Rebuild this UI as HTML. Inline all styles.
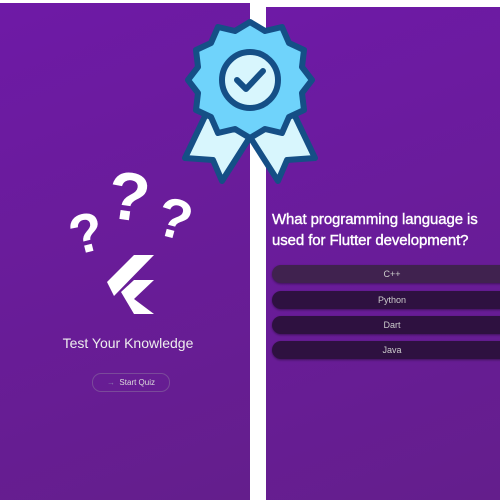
<!DOCTYPE html>
<html><head><style>
body{margin:0;width:500px;height:500px;background:#fff;position:relative;overflow:hidden;font-family:"Liberation Sans",sans-serif}
.p{position:absolute;background:linear-gradient(160deg,#6e1aa6,#641e8c)}
.opt{position:absolute;left:272px;width:240px;height:18px;border-radius:9px;background:#2e1140;color:#ccc;font-size:9px;text-align:center;line-height:18px;box-shadow:0 1px 2px rgba(0,0,0,.4)}
</style></head><body>
<div class="p" style="left:0;top:3px;width:250px;height:497px"></div>
<div class="p" style="left:266px;top:7px;width:234px;height:493px"></div>
<svg style="position:absolute;left:0;top:0" width="500" height="500">
<g fill="#fff" font-family="Liberation Sans" font-weight="bold" text-anchor="middle">
<text x="86" y="252" font-size="55" transform="rotate(-14 86 232)">?</text>
<text x="129" y="220" font-size="68" transform="rotate(8 129 195)">?</text>
<text x="175" y="238" font-size="56" transform="rotate(15 175 218)">?</text>
</g>
<g fill="#fff">
<polygon points="107,282 134,255 154,255 114,296"/>
<polygon points="121,292 134,280 154,280 134,299 154,314 134,314"/>
</g>
<g stroke="#154f86" stroke-width="6" stroke-linejoin="round" stroke-linecap="round">
<polygon points="207,112 185,158 213,160 222,181 250,137" fill="#d8f6fd"/>
<polygon points="293,112 315,158 287,160 278,181 250,137" fill="#d8f6fd"/>
<polygon fill="#6fd3fb" points="250,22 265,31 282,27 289,43 304,50 302,67 312,80 302,93 304,110 289,117 282,133 265,129 250,138 235,129 218,133 211,117 196,110 198,93 188,80 198,67 196,50 211,43 218,27 235,31"/>
<circle cx="250" cy="80" r="28" fill="#d8f6fd"/>
<polyline points="237,80 246,89 263,71" fill="none"/>
</g>
</svg>
<div style="position:absolute;left:0;width:256px;top:335px;text-align:center;color:#eee;font-size:14px">Test Your Knowledge</div>
<div style="position:absolute;left:92px;top:373px;width:76px;height:17px;border:1px solid #7a4a9a;border-radius:9px;color:#ddd;font-size:8px;line-height:17px;text-align:center"><span style="color:#8a7ab0">→</span>&nbsp; Start Quiz</div>
<div style="position:absolute;left:272px;top:209px;color:#fff;font-size:15px;line-height:21px;-webkit-text-stroke:0.4px #fff;letter-spacing:-0.1px">What programming language is<br>used for Flutter development?</div>
<div class="opt" style="top:265px;background:#40224f">C++</div>
<div class="opt" style="top:291px">Python</div>
<div class="opt" style="top:316px">Dart</div>
<div class="opt" style="top:341px">Java</div>
</body></html>
